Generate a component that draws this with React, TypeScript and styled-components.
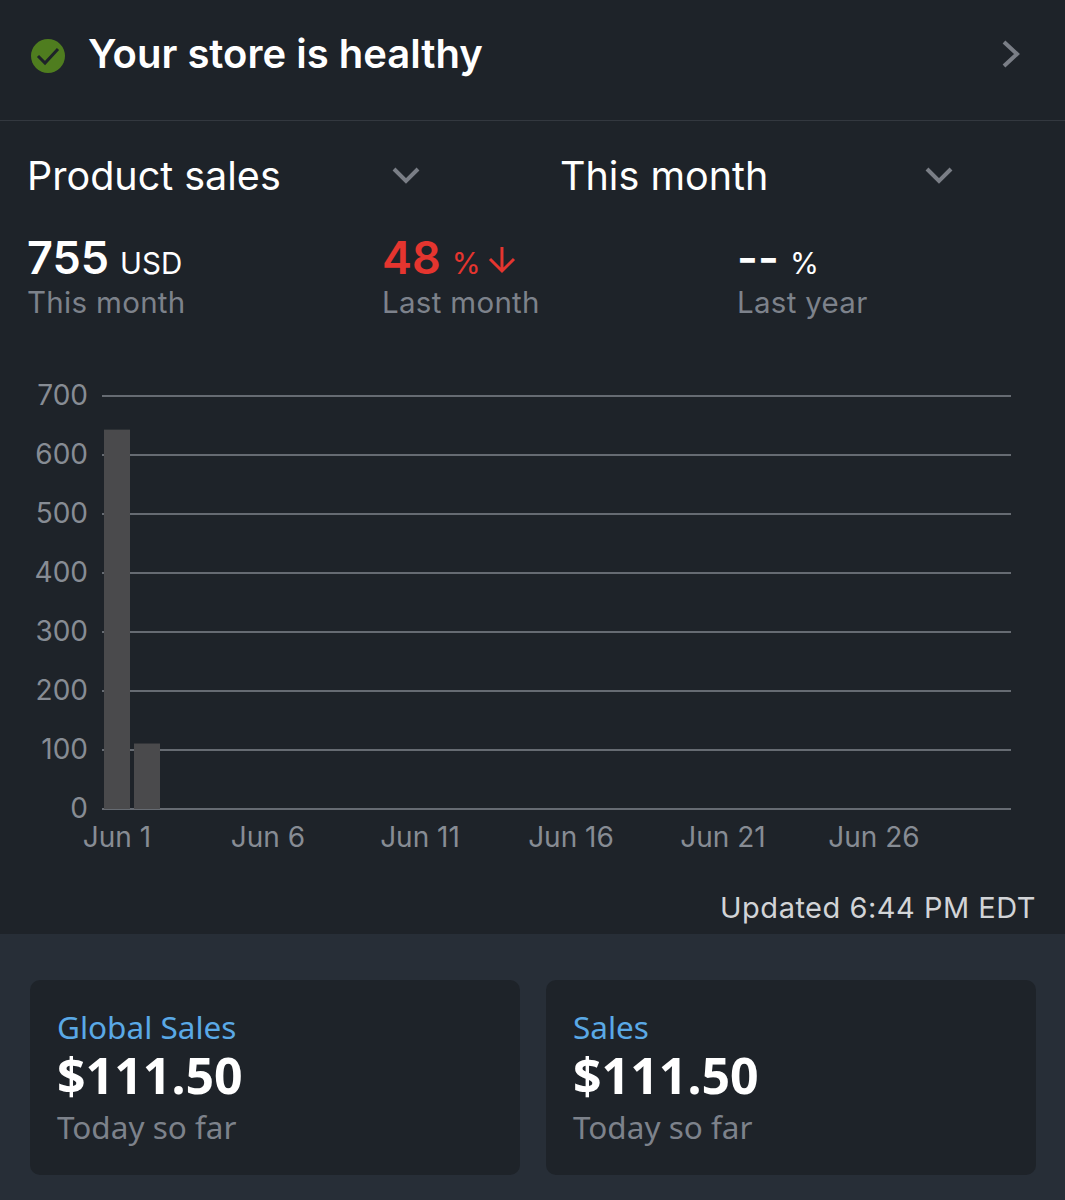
import React from "react";
import styled, { createGlobalStyle } from "styled-components";

const GlobalStyle = createGlobalStyle`
  html, body {
    margin: 0;
    padding: 0;
    background: #1e2329;
  }
  * {
    box-sizing: border-box;
  }
`;

const Page = styled.div`
  width: 1065px;
  height: 1200px;
  display: flex;
  flex-direction: column;
  background: #1e2329;
  font-family: Inter, "Liberation Sans", sans-serif;
  color: #fff;
  overflow: hidden;
`;

const HealthBar = styled.div`
  flex: none;
  height: 121px;
  padding: 0 44px 13px 30px;
  display: flex;
  align-items: center;
  border-bottom: 1px solid #33383f;
`;

const HealthIcon = styled.svg`
  margin-top: 4px;
`;

const HealthTitle = styled.div`
  margin-left: 22px;
  flex: 1;
  font-size: 40px;
  font-weight: 600;
`;

const Selectors = styled.div`
  flex: none;
  height: 110px;
  padding-left: 27px;
  display: flex;
  align-items: center;
  gap: 139px;
`;

const Selector = styled.div`
  flex: 0 0 394px;
  display: flex;
  align-items: center;
  justify-content: space-between;
  font-size: 39.5px;
  font-weight: 400;
  line-height: 48px;
`;

const Metrics = styled.div`
  flex: none;
  margin-top: 2px;
  padding-left: 27px;
  display: grid;
  grid-template-columns: 355px 355px 1fr;
`;

const Metric = styled.div`
  display: flex;
  flex-direction: column;
`;

const MetricValue = styled.div<{ $color?: string }>`
  height: 52px;
  display: flex;
  align-items: baseline;
  gap: 11px;
  color: ${(p) => p.$color || "#fff"};
`;

const MetricNumber = styled.span`
  font-size: 45px;
  font-weight: 600;
  line-height: 50px;
`;

const MetricUnit = styled.span`
  font-size: 29.5px;
  font-weight: 400;
`;

const MetricLabel = styled.div`
  font-size: 29.5px;
  line-height: 34px;
  color: #7d828b;
  letter-spacing: 0.3px;
`;

const ChartWrap = styled.div`
  flex: none;
  margin-top: 53px;
  height: 490px;
`;

const ChartSvg = styled.svg`
  display: block;
  font-family: Inter, "Liberation Sans", sans-serif;
  font-size: 28px;
  fill: #878c94;
`;

const Updated = styled.div`
  flex: none;
  height: 72px;
  padding: 18px 29px 0 0;
  display: flex;
  align-items: center;
  justify-content: flex-end;
  font-size: 29px;
  letter-spacing: 0.5px;
  color: #d2d4d7;
`;

const CardsArea = styled.div`
  flex: 1;
  min-height: 0;
  padding: 46px 30px 0 30px;
  display: grid;
  grid-template-columns: 490px 490px;
  column-gap: 26px;
  align-content: start;
  background: #272e37;
`;

const Card = styled.div`
  height: 195px;
  padding: 27px 27px 0 27px;
  border-radius: 10px;
  background: #1e2329;
  font-family: "Noto Sans", "Open Sans", sans-serif;
`;

const CardTitle = styled.div`
  font-size: 31.500px;
  line-height: 40px;
  color: #5aa9e6;
`;

const CardAmount = styled.div`
  font-size: 50px;
  font-weight: 700;
  line-height: 56px;
  color: #fff;
`;

const CardNote = styled.div`
  font-size: 31.500px;
  line-height: 48px;
  color: #7d828b;
`;

const ArrowSvg = styled.svg`
  margin-left: -5px;
`;

const CheckIcon = () => (
  <HealthIcon width="36" height="36" viewBox="0 0 36 36">
    <circle cx="18" cy="18" r="17" fill="#4f7d1f" />
    <path d="M8 18l7 7 13-14" fill="none" stroke="#1e2329" strokeWidth="3" />
  </HealthIcon>
);

const ChevronRight = () => (
  <svg width="20" height="30" viewBox="0 0 20 30">
    <path d="M3 3l13 12-13 12" fill="none" stroke="#7a7e86" strokeWidth="4" />
  </svg>
);

const ChevronDown = () => (
  <svg width="30" height="20" viewBox="0 0 30 20">
    <path d="M3 3l12 12 12-12" fill="none" stroke="#7a7e86" strokeWidth="4" />
  </svg>
);

const ArrowDown = () => (
  <ArrowSvg width="30" height="28" viewBox="0 0 30 28">
    <path d="M15 1v24M3 13l12 12 12-12" fill="none" stroke="#e5352f" strokeWidth="3" />
  </ArrowSvg>
);

const yTicks = [700, 600, 500, 400, 300, 200, 100, 0];
const xTicks = [
  { label: "Jun 1", x: 117 },
  { label: "Jun 6", x: 268 },
  { label: "Jun 11", x: 420 },
  { label: "Jun 16", x: 571 },
  { label: "Jun 21", x: 723 },
  { label: "Jun 26", x: 874 },
];
const bars = [
  { x: 104, value: 643 },
  { x: 134, value: 111 },
];

// 700 sits at y=24 in the chart and 0 at y=437
const baseY = 437;
const step = 59;

const SalesChart = () => (
  <ChartSvg width="1065" height="490" viewBox="0 0 1065 490">
    {yTicks.map((t, i) => (
      <g key={t}>
        <line x1="102" x2="1011" y1={24 + i * step} y2={24 + i * step} stroke="#7f848b" strokeWidth="1.500" />
        <text x="88" y={33 + i * step} textAnchor="end">
          {t}
        </text>
      </g>
    ))}
    {bars.map((b) => (
      <rect key={b.x} x={b.x} y={baseY - (b.value / 100) * step} width="26" height={(b.value / 100) * step} fill="#4a4a4c" />
    ))}
    {xTicks.map((t) => (
      <text key={t.label} x={t.x} y="475" textAnchor="middle">
        {t.label}
      </text>
    ))}
  </ChartSvg>
);

export default function App() {
  return (
    <Page>
      <GlobalStyle />
      <HealthBar>
        <CheckIcon />
        <HealthTitle>Your store is healthy</HealthTitle>
        <ChevronRight />
      </HealthBar>
      <Selectors>
        <Selector>
          Product sales
          <ChevronDown />
        </Selector>
        <Selector>
          This month
          <ChevronDown />
        </Selector>
      </Selectors>
      <Metrics>
        <Metric>
          <MetricValue>
            <MetricNumber>755</MetricNumber>
            <MetricUnit>USD</MetricUnit>
          </MetricValue>
          <MetricLabel>This month</MetricLabel>
        </Metric>
        <Metric>
          <MetricValue $color="#e5352f">
            <MetricNumber>48</MetricNumber>
            <MetricUnit>%</MetricUnit>
            <ArrowDown />
          </MetricValue>
          <MetricLabel>Last month</MetricLabel>
        </Metric>
        <Metric>
          <MetricValue>
            <MetricNumber>--</MetricNumber>
            <MetricUnit>%</MetricUnit>
          </MetricValue>
          <MetricLabel>Last year</MetricLabel>
        </Metric>
      </Metrics>
      <ChartWrap>
        <SalesChart />
      </ChartWrap>
      <Updated>Updated 6:44 PM EDT</Updated>
      <CardsArea>
        <Card>
          <CardTitle>Global Sales</CardTitle>
          <CardAmount>$111.50</CardAmount>
          <CardNote>Today so far</CardNote>
        </Card>
        <Card>
          <CardTitle>Sales</CardTitle>
          <CardAmount>$111.50</CardAmount>
          <CardNote>Today so far</CardNote>
        </Card>
      </CardsArea>
    </Page>
  );
}
